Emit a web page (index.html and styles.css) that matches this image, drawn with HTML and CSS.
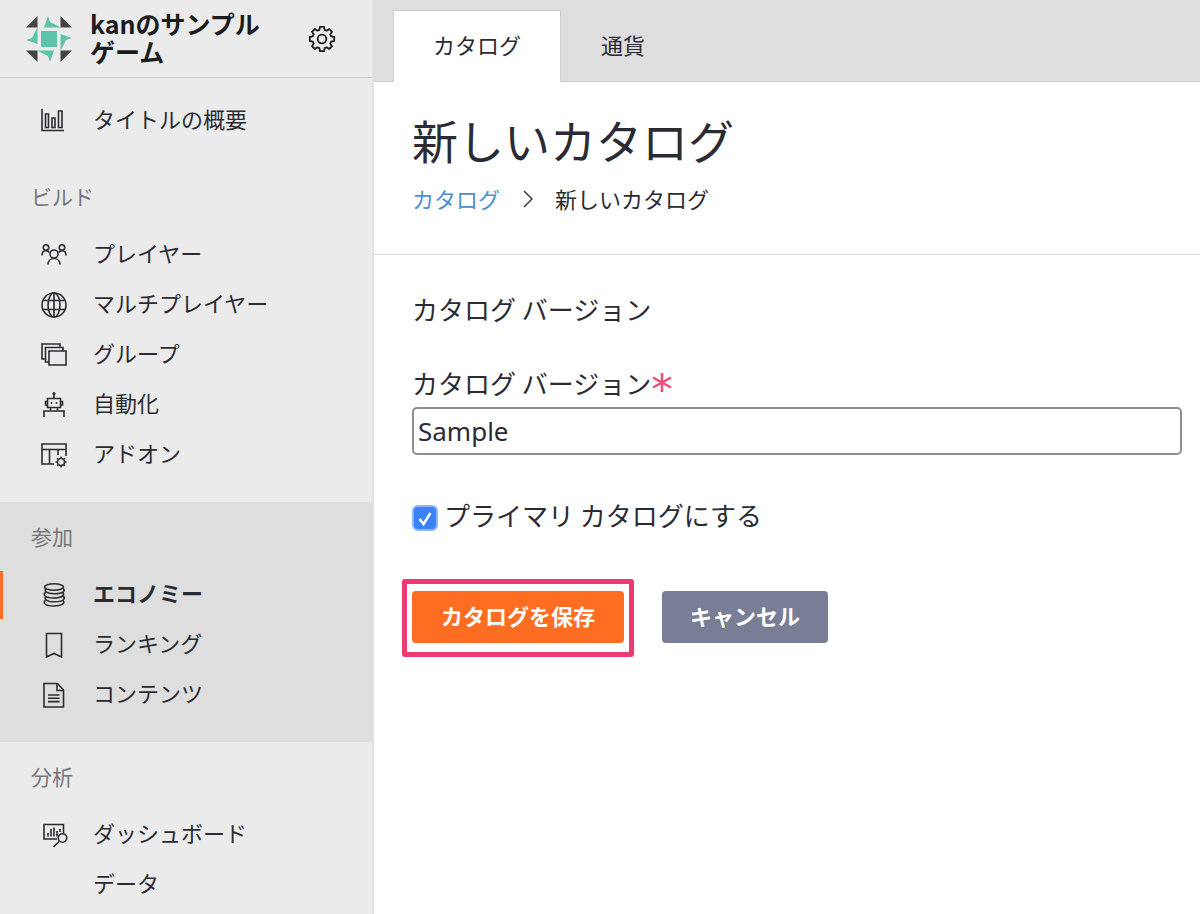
FILE: index.html
```html
<!DOCTYPE html>
<html lang="ja">
<head>
<meta charset="utf-8">
<meta name="viewport" content="width=device-width, initial-scale=1">
<title>新しいカタログ</title>
<link rel="stylesheet" href="styles.css">
</head>
<body>
<div class="app">
  <aside class="sidebar">
    <header class="studio">
      <svg class="studio-logo" viewBox="0 0 46 46" aria-hidden="true">
        <g fill="#444"><path d="M11.500 0V11.500H0zM34.500 0V11.500H46zM11.500 46V34.500H0zM34.500 46V34.500H46z"/></g>
        <g fill="#5cc4ab"><path d="M15 15h16v16H15z"/><path d="M22 0l2 6 11 5.500H18zM46 22l-6 2-5.500 11V18zM24 46l-2-6-11-5.500h17zM0 24l6-2 5.500-11v17z"/></g>
      </svg>
      <h2 class="studio-name">kanのサンプルゲーム</h2>
      <button class="gear" type="button" aria-label="設定">
        <svg viewBox="0 0 28 28" class="gear-icon" aria-hidden="true"><path d="M11.400 4.800L12 1.800H16L16.600 4.800 18.700 5.700 21.200 4 24 6.800 22.300 9.300 23.200 11.400 26.200 12V16L23.200 16.600 22.300 18.700 24 21.200 21.200 24 18.700 22.300 16.600 23.200 16 26.200H12L11.400 23.200 9.300 22.300 6.800 24 4 21.200 5.700 18.700 4.800 16.600 1.800 16V12L4.800 11.400 5.700 9.300 4 6.800 6.800 4 9.300 5.700z"/><circle cx="14" cy="14" r="4.300"/></svg>
      </button>
    </header>
    <nav>
      <section class="group group-top">
        <a class="item" href="#"><svg viewBox="0 0 28 28" class="icon" aria-hidden="true"><path d="M2 2v21.500h22M5.500 7h3v13.500h-3zM12 11h3v9.500h-3zM18.500 4h3.500v16.500h-3.500z"/></svg>タイトルの概要</a>
      </section>
      <section class="group">
        <h3 class="group-title">ビルド</h3>
        <a class="item" href="#"><svg viewBox="0 0 28 28" class="icon" aria-hidden="true"><circle cx="6" cy="6.500" r="2.700"/><circle cx="22" cy="6.500" r="2.700"/><circle cx="14" cy="13" r="4"/><path d="M2 14.500c0-5.500 5-6 7.500-3M26 14.500c0-5.500-5-6-7.500-3M8 23.500c0-8 12-8 12 0"/></svg>プレイヤー</a>
        <a class="item" href="#"><svg viewBox="0 0 28 28" class="icon" aria-hidden="true"><circle cx="14" cy="14" r="12"/><ellipse cx="14" cy="14" rx="6" ry="12"/><path d="M14 2v24M3.300 9.500h21.400M3.300 18.500h21.400"/></svg>マルチプレイヤー</a>
        <a class="item" href="#"><svg viewBox="0 0 28 28" class="icon" aria-hidden="true"><path d="M9 10h17v14H9zM9 21H5.500V6.500H23V10M5.500 18H2V3h18v3.500"/></svg>グループ</a>
        <a class="item" href="#"><svg viewBox="0 0 28 28" class="icon" aria-hidden="true"><path d="M14 3v4M7.500 7.500h13v9h-13zM7.500 10.500H5.500v3.500h2M20.500 10.500h2v3.500h-2M4 26v-6h20v6M10.500 16.500v3.500M17.500 16.500v3.500"/><circle cx="14" cy="2.500" r="1.500" fill="currentColor" stroke="none"/><circle cx="11.500" cy="12" r="1" fill="currentColor" stroke="none"/><circle cx="16.500" cy="12" r="1" fill="currentColor" stroke="none"/></svg>自動化</a>
        <a class="item" href="#"><svg viewBox="0 0 28 28" class="icon" aria-hidden="true"><path d="M14 23H2V3h24v12M2 8.500h24M9.500 8.500V23M18 8.500V14"/><circle cx="21" cy="21" r="3.500"/><path d="M21 15.500v2M21 24.500v2M15.500 21h2M24.500 21h2M17.100 17.100l1.400 1.400M23.500 23.500l1.400 1.400M17.100 24.900l1.400-1.400M23.500 18.500l1.400-1.400"/></svg>アドオン</a>
      </section>
      <section class="group group-active">
        <h3 class="group-title">参加</h3>
        <a class="item item-current" href="#" aria-current="page"><svg viewBox="0 0 28 28" class="icon" aria-hidden="true"><ellipse cx="14" cy="6" rx="9.500" ry="3.200"/><path d="M6 8c-2 1.500-.5 4.700 8.500 4.700S26 9.500 23 7.500M5.500 11.500c-3 2-1 5.500 8 5.500s12-3.500 9-5.500M6 15.500c-2 1.500-1 5.300 8.500 5.300s11.500-3.500 8.500-5.800M5.500 19.500c-3 2-1 5.500 8 5.500s12-3 9.500-5.500"/></svg>エコノミー</a>
        <a class="item" href="#"><svg viewBox="0 0 28 28" class="icon" aria-hidden="true"><path d="M6.500 2.500h15v23.500L14 22.500 6.500 26z"/></svg>ランキング</a>
        <a class="item" href="#"><svg viewBox="0 0 28 28" class="icon" aria-hidden="true"><path d="M4 2.500h13.500L23.500 9v17H4zM17 2.500V9.500h6.500M8 14h11.500M8 17.300h11.500M8 20.600h11.500"/></svg>コンテンツ</a>
      </section>
      <section class="group">
        <h3 class="group-title">分析</h3>
        <a class="item" href="#"><svg viewBox="0 0 28 28" class="icon" aria-hidden="true"><path d="M17 18H4V3.500h19.500V12M8 12v3.500M11 8v7.500M14 6.500v9M17 10v5.500M20 8v3M19 20.500L13.500 26"/><circle cx="22.500" cy="17" r="4.200"/></svg>ダッシュボード</a>
        <a class="item" href="#"><span class="icon"></span>データ</a>
      </section>
    </nav>
  </aside>
  <main class="main">
    <nav class="tabs">
      <a class="tab tab-active" href="#" aria-current="page">カタログ</a>
      <a class="tab" href="#">通貨</a>
    </nav>
    <header class="page-head">
      <h1 class="page-title">新しいカタログ</h1>
      <div class="crumbs">
        <a class="crumb-link" href="#">カタログ</a>
        <svg class="chevron" viewBox="0 0 10 18" aria-hidden="true"><path d="M1 1l8 8-8 8"/></svg>
        <span>新しいカタログ</span>
      </div>
    </header>
    <form class="form">
      <h2 class="form-title">カタログ バージョン</h2>
      <label class="label" for="version">カタログ バージョン<svg class="required" viewBox="0 0 20 20" aria-hidden="true"><path d="M10 0v19M1 4.500l18 10M1 14.500l18-10"/></svg></label>
      <input class="input" id="version" type="text" value="Sample" required>
      <div class="check-row">
        <span class="check-box">
          <input class="check" id="primary" type="checkbox" checked>
          <svg class="check-mark" viewBox="0 0 26 26" aria-hidden="true"><path d="M7.500 14l4 5L18.500 8"/></svg>
        </span>
        <label for="primary">プライマリ カタログにする</label>
      </div>
      <div class="actions">
        <button class="btn btn-save" type="button">カタログを保存</button>
        <button class="btn btn-cancel" type="button">キャンセル</button>
      </div>
    </form>
  </main>
</div>
</body>
</html>
```
FILE: styles.css
```css
* {
  box-sizing: border-box;
}

body {
  margin: 0;
  font-family: "Noto Sans CJK JP", sans-serif;
  font-size: 22px;
  line-height: 30px;
  color: #2b2b33;
  background: #fff;
}

h1, h2, h3 {
  margin: 0;
  font-weight: 400;
}

a {
  color: inherit;
  text-decoration: none;
}

.app {
  display: flex;
  height: 100vh;
  overflow: hidden;
}

.sidebar {
  flex: 0 0 374px;
  overflow: hidden;
  background: #ebebeb;
  border-right: 2px solid #e2e2e2;
}

.studio {
  display: flex;
  align-items: center;
  height: 78px;
  padding: 0 36px 0 26px;
  border-bottom: 1px solid #cfcfcf;
}

.studio-logo {
  flex: none;
  width: 46px;
  height: 46px;
}

.studio-name {
  flex: 1;
  margin: 0 36px 0 18px;
  padding-bottom: 3px;
  font-size: 25px;
  font-weight: 700;
  line-height: 28px;
  color: #1c1c1e;
}

.gear {
  display: flex;
  padding: 0;
  border: 0;
  background: none;
  color: #1c1c1e;
}

.gear-icon {
  width: 28px;
  height: 28px;
  fill: none;
  stroke: currentColor;
  stroke-width: 1.8px;
  stroke-linejoin: round;
}

.icon {
  flex: none;
  width: 28px;
  height: 28px;
  margin-top: 6px;
  fill: none;
  stroke: currentColor;
  stroke-width: 1.6px;
}

.group {
  padding-bottom: 23px;
}

.group-top {
  padding: 17px 0;
}

.group-active {
  background: #dedede;
}

.group-title {
  padding: 19px 31px 18px;
  font-size: 21px;
  color: #77777b;
}

.item {
  display: flex;
  align-items: center;
  gap: 25px;
  height: 50px;
  padding: 0 0 4px 40px;
}

.item-current {
  position: relative;
  font-weight: 700;
}

.item-current::before {
  content: "";
  position: absolute;
  left: 0;
  top: 2px;
  width: 3px;
  height: 48px;
  background: #ff6d22;
}

.main {
  flex: 1;
  min-width: 0;
}

.tabs {
  display: flex;
  padding: 10px 19px 0;
  background: #dedede;
  box-shadow: inset 0 -1px #cfcfcf;
}

.tab {
  padding: 18px 39px 23px;
  border: 1px solid transparent;
  border-bottom: 0;
}

.tab-active {
  border-color: #cfcfcf;
  background: #fff;
}

.page-head {
  padding: 29px 18px 41px 38px;
  border-bottom: 1px solid #dedede;
}

.page-title {
  font-size: 46px;
  line-height: 56px;
}

.crumbs {
  display: flex;
  align-items: center;
  margin-top: 16px;
}

.crumb-link {
  color: #4a90cf;
}

.chevron {
  width: 10px;
  height: 18px;
  margin: 2px 22px 0 23px;
  fill: none;
  stroke: currentColor;
  stroke-width: 1.3px;
}

.form {
  padding: 36px 18px 0 38px;
  font-size: 26px;
  line-height: 36px;
}

.form-title {
  font-size: 26px;
}

.label {
  display: flex;
  align-items: center;
  margin-top: 38px;
}

.required {
  width: 20px;
  height: 20px;
  margin-left: 1px;
  fill: none;
  stroke: #e8507c;
  stroke-width: 2.5px;
}

.input {
  display: block;
  width: 100%;
  height: 48px;
  margin-top: 6px;
  padding: 0 4px;
  border: 2px solid #8e8e8e;
  border-radius: 5px;
  background: #fff;
  font: 26px "Noto Sans", sans-serif;
  color: #2b2b33;
}

.check-row {
  display: flex;
  align-items: center;
  gap: 6px;
  margin-top: 42px;
}

.check-box {
  position: relative;
  flex: none;
  width: 26px;
  height: 26px;
  margin-top: 6px;
}

.check {
  display: block;
  width: 100%;
  height: 100%;
  margin: 0;
  appearance: none;
  border: 2px solid #8db8f6;
  border-radius: 6px;
  background: #fff;
}

.check:checked {
  background: #3b82f6;
}

.check-mark {
  position: absolute;
  inset: 0;
  fill: none;
  stroke: #fff;
  stroke-width: 2.5px;
  pointer-events: none;
}

.actions {
  display: flex;
  gap: 38px;
  margin-top: 58px;
}

.btn {
  height: 52px;
  padding: 0 28px 4px;
  border: 0;
  border-radius: 4px;
  font: 700 22px "Noto Sans CJK JP", sans-serif;
  color: #fff;
}

.btn-save {
  position: relative;
  padding: 0 29px 4px;
  background: #ff6d22;
}

.btn-save::after {
  content: "";
  position: absolute;
  inset: -12px -10px -14px;
  border: 5px solid #ee3a72;
  border-radius: 3px;
}

.btn-cancel {
  background: #797d95;
}
```
